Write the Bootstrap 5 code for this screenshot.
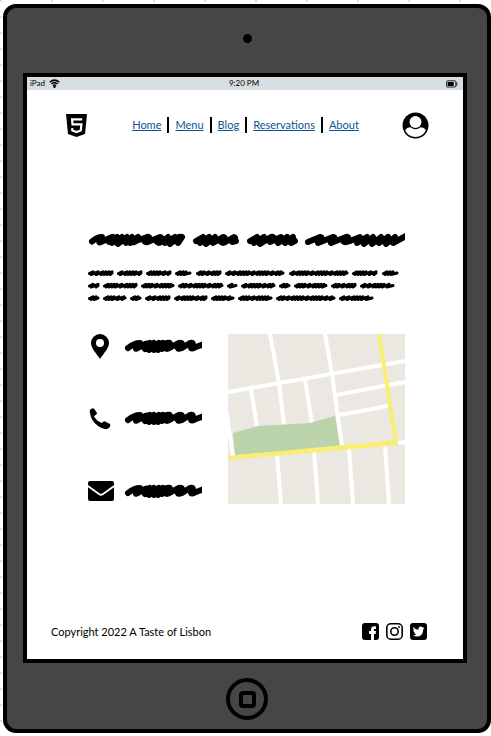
<!DOCTYPE html>
<html lang="en">
<head>
<meta charset="utf-8">
<meta name="viewport" content="width=device-width, initial-scale=1">
<title>A Taste of Lisbon – Contact</title>
<link href="https://cdn.jsdelivr.net/npm/bootstrap@5.3.0/dist/css/bootstrap.min.css" rel="stylesheet">
<style>
body{font-family:Lato,"Open Sans",sans-serif;color:#000;font-size:11px;line-height:14px;background:#fff radial-gradient(circle at 1px 1px,#ddd 1px,transparent 1px) 0 0/51px 16px}
svg{display:block}
.page{padding:4px 0 3px 3px}
.tablet{background:#464646;border:4px solid #000;border-radius:13px}
.bezel-top{height:65px}
.camera{width:9px;height:9px;background:#000;margin-top:-4px}
.screen{border:4px solid #000;margin:0 20px 0 16px;background:#fff}
.bezel-bottom{height:66px;padding-top:6px}
.home-button{width:42px;height:42px;border:4px solid #000}
.home-button span{width:17px;height:17px;border:4px solid #000;border-radius:4px}
.status{background:#d7dee1;height:13px;line-height:13px;padding:0 5px 0 3px;font-size:8px;grid-template-columns:1fr auto 1fr}
.top{padding:22px 34px 0 39px}
.links{line-height:15px;padding:0 0 2px 2px}
.links a{color:#0b5394}
.links li+li::before{content:"";width:2px;height:16px;background:#000;margin:0 6px}
.content{padding:94px 58px 0 61px}
.para{margin:22px 0 32px}
.contacts{height:171px}
.map-col{width:177px}
.bottom{padding:0 36px 19px 24px}
.social{gap:7px}
.scribble{fill:none;stroke:#000;stroke-linecap:round;stroke-linejoin:round}
</style>
<script src="https://cdn.jsdelivr.net/npm/bootstrap@5.3.0/dist/js/bootstrap.bundle.min.js"></script>
</head>
<body>
<svg width="0" height="0" class="position-absolute" aria-hidden="true"><defs>
<path id="line" d="M4 9Q10 4 16 4Q9 12 14 9L21 5Q26 3 21 10L26 4L25 11L30 4L30 11L35 4L34 11L39 4L38 10L43 4Q47 3 45 5L41 9Q43 11 47 8L55 4Q61 3 54 8Q53 11 58 9L66 4Q71 3 67 8Q67 11 72 8L80 5"/>
</defs></svg>
<div class="page min-vh-100 d-flex flex-column">
<div class="tablet flex-grow-1 d-flex flex-column">
<div class="bezel-top d-flex justify-content-center align-items-center"><div class="camera rounded-circle"></div></div>
<div class="screen d-flex flex-column flex-grow-1">
<div class="status d-grid">
<span class="d-flex align-items-center gap-1">iPad <svg width="11" height="9" viewBox="0 0 11 9" fill="none" stroke="#000" stroke-width="1.5" role="img" aria-label="Wi-Fi"><path d="M.7 3.2Q5.500-1 10.300 3.200M2.400 5Q5.500 2.200 8.600 5M4 6.700Q5.500 5.500 7 6.700"/><circle cx="5.500" cy="7.700" r=".5"/></svg></span>
<span>9:20 PM</span>
<span class="d-flex justify-content-end align-items-center"><svg width="12" height="8" viewBox="0 0 12 8" role="img" aria-label="Battery"><rect x=".6" y=".8" width="9.200" height="6.200" rx="1" fill="none" stroke="#222"/><path d="M1.700 2h6v4h-6z"/><path d="M10.500 2.200q1.300 1.700 0 3.500" fill="none" stroke="#222"/></svg></span>
</div>
<header class="top d-flex justify-content-between align-items-center">
<a href="#" aria-label="Logo"><svg width="21" height="23" viewBox="0 0 21 23"><path d="M0 0h21l-2 20-8.500 3L2 20z" fill="#000"/><path d="M16.200 5.300H6.100l.4 5.100h8.900l-.6 6.100-4.300 1.500-4.200-1.500-.2-2.400" fill="none" stroke="#fff" stroke-width="2.200"/></svg></a>
<nav aria-label="Main"><ul class="links list-unstyled d-flex m-0">
<li class="d-flex align-items-center"><a href="#">Home</a></li><li class="d-flex align-items-center"><a href="#">Menu</a></li><li class="d-flex align-items-center"><a href="#">Blog</a></li><li class="d-flex align-items-center"><a href="#">Reservations</a></li><li class="d-flex align-items-center"><a href="#">About</a></li>
</ul></nav>
<a href="#" aria-label="Account"><svg width="27" height="27" viewBox="0 0 27 27"><circle cx="13.500" cy="13.500" r="13" fill="#000"/><circle cx="13.500" cy="10" r="6" fill="#fff"/><path d="M3.100 18.200Q5 15.200 8.400 15.200Q13.500 19.500 18.600 15.200Q22 15.200 23.900 18.200A11.400 11.400 0 0 1 3.100 18.200z" fill="#fff"/></svg></a>
</header>
<main class="content flex-grow-1">
<svg class="scribble w-100" viewBox="0 0 317 14" stroke-width="6" role="img" aria-label="Heading">
<path d="M4 8.500Q9 4 14 4Q9 11 13 9L24 4Q27 3 21 9L29 4L24 10L34 4L30 11L39 4L38 10L44 4L42 10L50 4Q42 12 48 8L59 4Q64 3 57 9Q58 10 62 8L72 4Q75 4 69 9Q71 11 75 8L80 4L77 10L87 4L82 11L91 4L90 10L94 4"/>
<path d="M108 8L115 4L112 10L121 4L118 11L127 4L125 10L135 4Q139 4 133 9Q135 11 139 8L146 4Q149 5 144 9L148 8"/>
<path d="M162 8L169 4L166 10L176 4L172 11L183 4Q188 3 182 9L193 4L190 10L199 4L197 10L205 4L203 10L207 8"/>
<path d="M220 9L232 4Q236 4 230 10L245 4Q249 4 243 10L258 4Q263 3 256 9Q257 10 262 8L272 4L269 10L279 4L276 11L285 4L284 11L293 4L291 10L300 4L298 11L307 4L305 10L318 3"/></svg>
<svg class="scribble para w-100" viewBox="0 0 317 33" stroke-width="3" role="img" aria-label="Paragraph"><path id="copy"/></svg>
<div class="d-flex justify-content-between">
<div class="contacts d-flex flex-column justify-content-between">
<div class="d-flex align-items-start gap-2"><svg width="28" height="26" viewBox="0 0 28 26" role="img" aria-label="Address"><path fill-rule="evenodd" d="M12 0a9 9 0 0 1 9 9c0 5-5 10-9 16C8 19 3 14 3 9a9 9 0 0 1 9-9zm0 5a4 4 0 1 0 0 8 4 4 0 0 0 0-8z"/></svg><svg class="scribble mt-1" width="78" height="16" viewBox="0 0 78 16" stroke-width="6"><use href="#line" y="1"/></svg></div>
<div class="d-flex align-items-start gap-2"><svg width="28" height="22" viewBox="0 0 28 22" role="img" aria-label="Phone"><path d="M3 1Q6-1 7 2L9 5Q9 7 6 8Q8 13 14 15Q16 12 18 14L22 16Q23 18 21 20Q17 23 10 18Q3 13 2 5Q1 2 3 1z"/></svg><svg class="scribble" width="78" height="18" viewBox="0 0 78 18" stroke-width="6"><use href="#line" y="3"/></svg></div>
<div class="d-flex align-items-center gap-2"><svg width="28" height="28" viewBox="0 0 28 28" role="img" aria-label="Email"><rect y="4" width="26" height="20" rx="2"/><path d="M-1 8.500L11 17Q13 18.500 15 17L27 8.500" fill="none" stroke="#fff" stroke-width="1.800"/></svg><svg class="scribble" width="78" height="16" viewBox="0 0 78 16" stroke-width="6"><use href="#line" y="1"/></svg></div>
</div>
<svg class="map-col" height="170" viewBox="0 0 177 170" role="img" aria-label="Map"><path fill="#ebe8e1" d="M0 0h177v170H0z"/>
<g fill="none" stroke="#fff" stroke-width="4"><path d="M0 58L177 27M42 0L51 49L56 91M97 0L104 40L114 112M108 61L177 48M111 81L160 72M23 55L29 93M77 46L84 89M-2 75L5 122M170 109L177 108M49 121L53 170M86 117L90 170M121 115L125 170M157 112L161 170"/></g>
<path fill="#bad3ab" d="M5 99L30 92L82 89L107 82L112 113L7 121z"/>
<path fill="none" stroke="#faee72" stroke-width="4" d="M151 0L168 108"/><path fill="#faee72" d="M0 122L168 106L170 111L0 126z"/></svg>
</div>
</main>
<footer class="bottom d-flex justify-content-between align-items-center">
<span>Copyright 2022 A Taste of Lisbon</span>
<div class="social d-flex">
<a href="#" aria-label="Facebook"><svg width="17" height="17" viewBox="0 0 17 17"><rect width="17" height="17" rx="3"/><path d="M9 17v-6H7V8h2V6.500C9 4 10.500 3 14 3.300V6h-1.300Q12 6 12 7v1h2l-.3 3H12v6z" fill="#fff"/></svg></a>
<a href="#" aria-label="Instagram"><svg width="17" height="17" viewBox="0 0 17 17" fill="none" stroke="#000" stroke-width="1.600"><rect x=".8" y=".8" width="15.400" height="15.400" rx="4"/><circle cx="8.500" cy="8.500" r="3.700"/><circle cx="13" cy="4" r=".9" fill="#000" stroke="none"/></svg></a>
<a href="#" aria-label="Twitter"><svg width="17" height="17" viewBox="0 0 17 17"><rect width="17" height="17" rx="3"/><path d="M3 4q2.500 2.800 5.500 2.700Q8 4 10.500 3.600q1.300 0 2 .8l1.500-.5-.8 1.400 1.300-.3-1.300 1.400Q13 12 9 13.300q-3 .8-6.300-.9 2.200 0 3.500-1.200-1.700-.2-2.200-1.700h1Q3.200 8.500 3.200 6.900l1 .2Q2.500 5.700 3 4z" fill="#fff"/></svg></a>
</div>
</footer>
</div>
<div class="bezel-bottom d-flex justify-content-center align-items-center"><button type="button" class="home-button rounded-circle bg-transparent p-0 d-flex justify-content-center align-items-center" aria-label="Home button"><span></span></button></div>
</div>
</div>
<script>
// Start and end of every scribbled word, one list per paragraph line
const lines=[
[[0,25],[29,54],[58,83],[87,103],[108,133],[137,196],[201,260],[264,289],[294,310]],
[[0,11],[15,49],[53,86],[90,135],[139,149],[153,187],[191,202],[206,239],[243,268],[272,306]],
[[0,11],[15,38],[42,53],[57,82],[86,119],[123,146],[150,184],[188,247],[251,285]]];
let d="";
lines.forEach((words,i)=>{
  const y=4+i*12.5;
  words.forEach(([a,b],w)=>{
    d+=`M${a+1.5} ${y+.5}`;
    for(let x=a+4,n=w+i;x<b-1;x+=(n%5<2?5:3),n++) d+=`L${x+1} ${y-1.2}L${x-1} ${y+1.5}`;
    d+=`L${b-1} ${y}`;
  });
});
document.getElementById("copy").setAttribute("d",d);
</script>
</body>
</html>
